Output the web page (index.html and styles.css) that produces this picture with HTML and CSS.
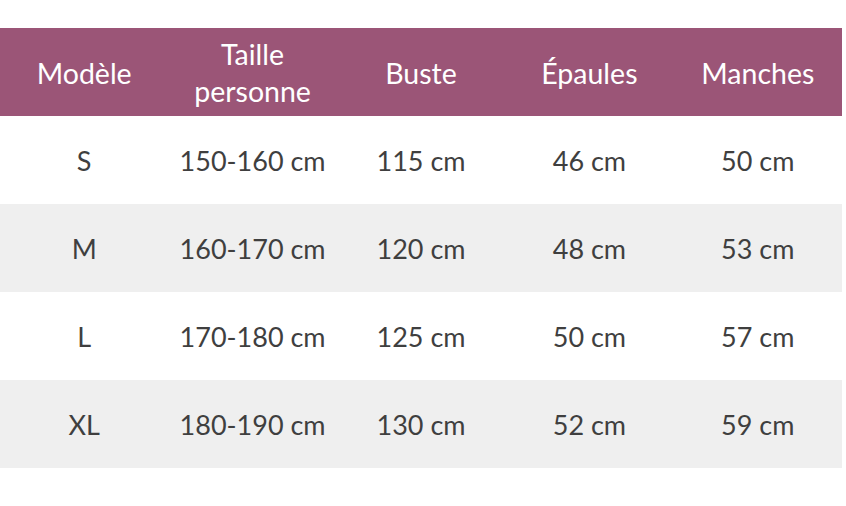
FILE: index.html
```html
<!DOCTYPE html>
<html lang="fr">
<head>
<meta charset="utf-8">
<link rel="stylesheet" href="styles.css">
</head>
<body>
<div class="table">
  <div class="row head">
    <div class="cell">Modèle</div>
    <div class="cell">Taille<br>personne</div>
    <div class="cell">Buste</div>
    <div class="cell">Épaules</div>
    <div class="cell">Manches</div>
  </div>
  <div class="row">
    <div class="cell">S</div>
    <div class="cell">150-160 cm</div>
    <div class="cell">115 cm</div>
    <div class="cell">46 cm</div>
    <div class="cell">50 cm</div>
  </div>
  <div class="row alt">
    <div class="cell">M</div>
    <div class="cell">160-170 cm</div>
    <div class="cell">120 cm</div>
    <div class="cell">48 cm</div>
    <div class="cell">53 cm</div>
  </div>
  <div class="row">
    <div class="cell">L</div>
    <div class="cell">170-180 cm</div>
    <div class="cell">125 cm</div>
    <div class="cell">50 cm</div>
    <div class="cell">57 cm</div>
  </div>
  <div class="row alt">
    <div class="cell">XL</div>
    <div class="cell">180-190 cm</div>
    <div class="cell">130 cm</div>
    <div class="cell">52 cm</div>
    <div class="cell">59 cm</div>
  </div>
</div>
</body>
</html>
```
FILE: styles.css
```css
html, body {
  margin: 0;
  padding: 0;
  background: #ffffff;
}
body {
  font-family: Lato, "Open Sans", sans-serif;
  color: #3f3f3f;
}
.table {
  margin-top: 28px;
  width: 842px;
}
.row {
  display: grid;
  grid-template-columns: repeat(5, 1fr);
  height: 88px;
}
.cell {
  display: flex;
  align-items: center;
  justify-content: center;
  text-align: center;
  font-size: 27px;
  line-height: 37px;
}
.head {
  background: #9b5577;
  color: #ffffff;
}
.head .cell {
  padding-top: 2px;
  font-size: 28.5px;
}
.alt {
  background: #efefef;
}
```
